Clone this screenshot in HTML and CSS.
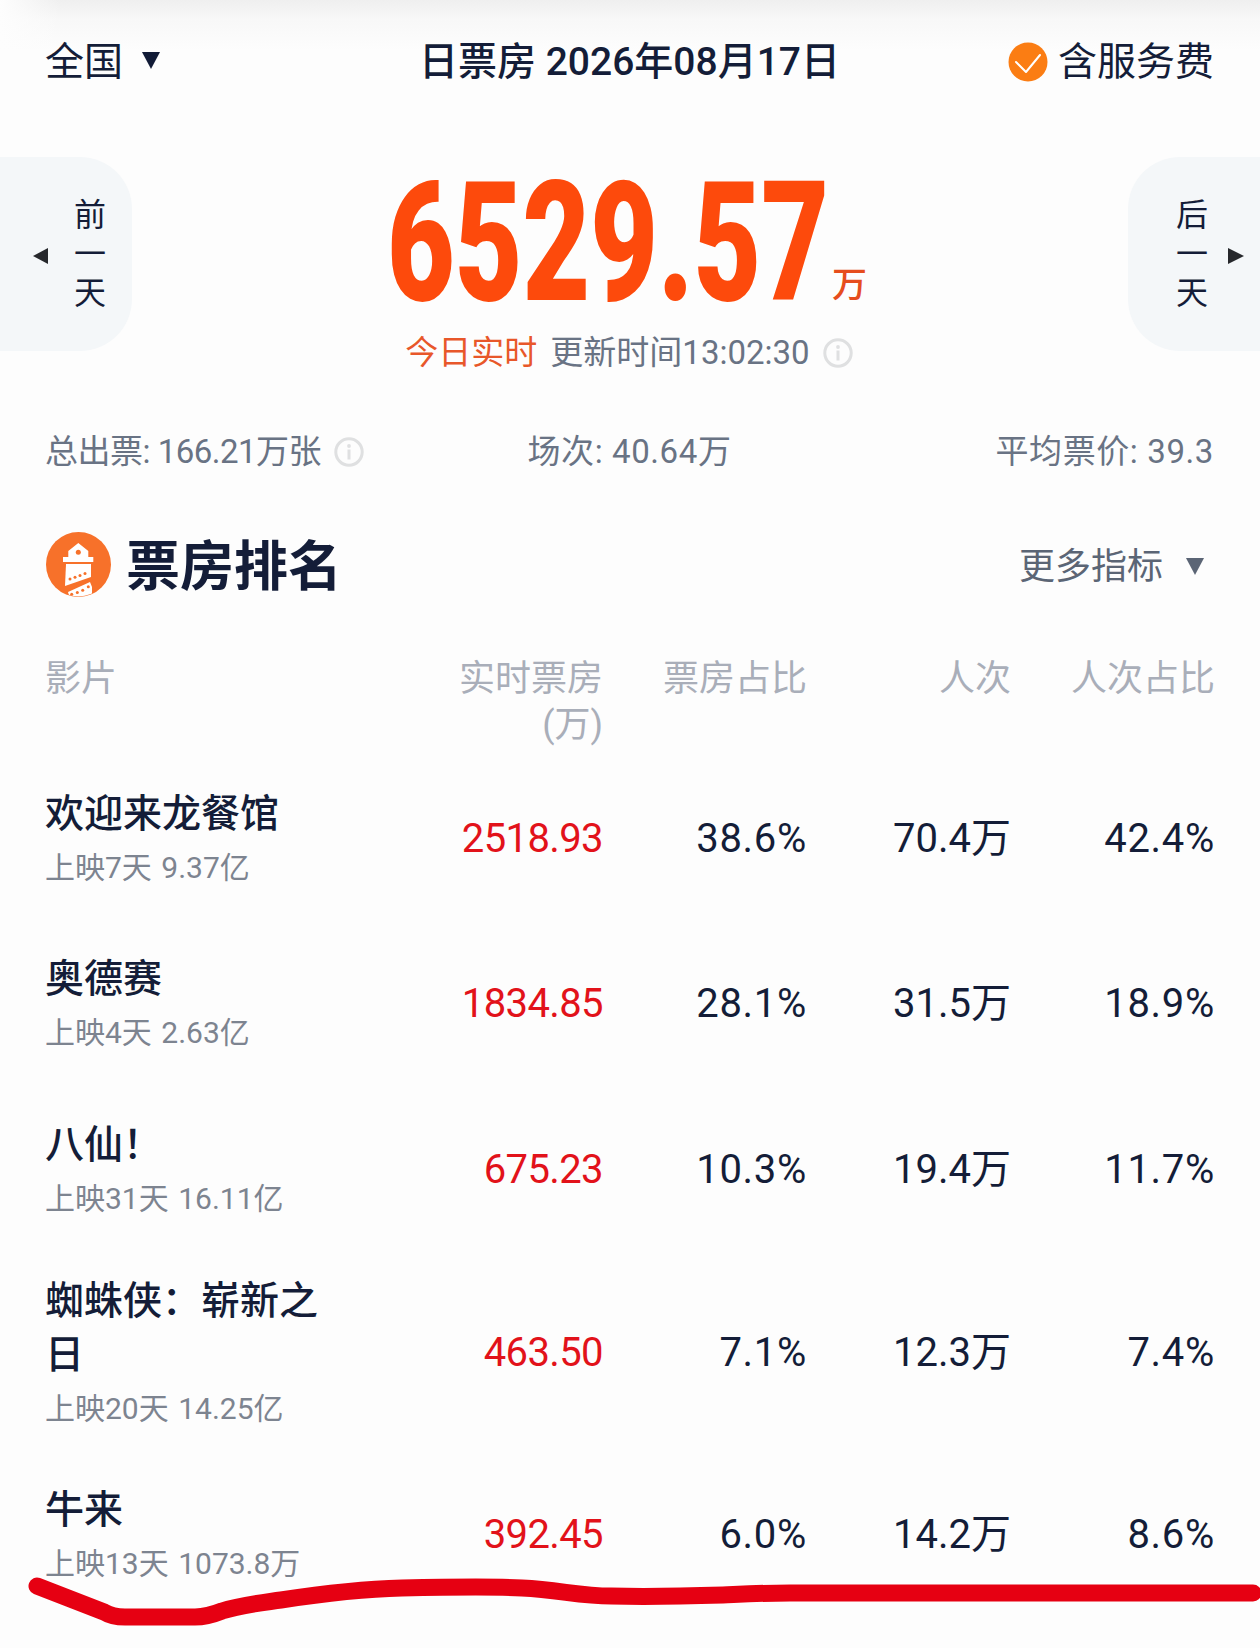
FILE: index.html
```html
<!DOCTYPE html>
<html lang="zh-CN">
<head>
<meta charset="utf-8">
<title>日票房</title>
<link rel="stylesheet" href="styles.css">
</head>
<body>
<div class="page">
  <header class="top">
    <div class="region"><span>全国</span><i class="tri tri-down tri-region"></i></div>
    <div class="date">日票房 2026年08月17日</div>
    <div class="fee">
      <svg class="check" viewBox="0 0 40 40"><circle cx="20" cy="20" r="19.5" fill="#fb7d13"/><path d="M8 20l10 10L32 13" fill="none" stroke="#fff" stroke-width="2" stroke-linecap="round" stroke-linejoin="round"/></svg>
      <span>含服务费</span>
    </div>
  </header>

  <section class="hero">
    <div class="day day-prev">
      <i class="arrow arrow-left"></i>
      <div class="day-text"><span>前</span><span>一</span><span>天</span></div>
    </div>
    <div class="hero-main">
      <div class="total"><span class="total-box"><span class="total-num">6529.57</span></span><span class="total-unit">万</span></div>
      <div class="updated">
        <span class="live">今日实时</span><span class="time">更新时间13:02:30</span>
        <svg class="info" viewBox="0 0 30 30"><use href="#info-glyph"/></svg>
      </div>
    </div>
    <div class="day day-next">
      <div class="day-text"><span>后</span><span>一</span><span>天</span></div>
      <i class="arrow arrow-right"></i>
    </div>
  </section>

  <section class="stats">
    <div class="stat stat-left"><span>总出票: 166.21万张</span>
      <svg class="info" viewBox="0 0 30 30"><use href="#info-glyph"/></svg></div>
    <div class="stat stat-mid">场次: 40.64万</div>
    <div class="stat stat-right">平均票价: 39.3</div>
  </section>

  <section class="rank-head">
    <svg class="logo" viewBox="0 0 65 65">
      <defs><clipPath id="logo-clip"><circle cx="32.5" cy="32.5" r="32"/></clipPath></defs>
      <circle cx="32.5" cy="32.5" r="32.5" fill="#f7712a"/>
      <path d="M32.3 11l10 8v6h5v5H17v-5h5.3v-6z" fill="#fff"/>
      <circle cx="32.3" cy="20.3" r="2.5" fill="#f7712a"/>
      <path d="M20 32h25v13l-26 9z" fill="#fff"/>
      <path d="M22 60l22-10 2 5v12H24z" fill="#fff" clip-path="url(#logo-clip)"/>
      <g fill="#f7712a"><circle cx="24" cy="47" r="1.5"/><circle cx="29" cy="45.2" r="1.5"/><circle cx="34" cy="43.4" r="1.5"/><circle cx="39" cy="41.6" r="1.5"/>
      <circle cx="25.7" cy="62.3" r="1.5"/><circle cx="31.3" cy="60.5" r="1.5"/><circle cx="36.7" cy="58.3" r="1.5"/><circle cx="42.3" cy="54.8" r="1.5"/></g>
    </svg>
    <h2 class="rank-title">票房排名</h2>
    <div class="more"><span>更多指标</span><i class="tri tri-down tri-grey"></i></div>
  </section>

  <section class="table">
    <div class="row row-head">
      <div class="film-h">影片</div>
      <div class="num">实时票房<br>(万)</div>
      <div class="num">票房占比</div>
      <div class="num">人次</div>
      <div class="num">人次占比</div>
    </div>
    <div class="row">
      <div class="film"><div class="film-name">欢迎来龙餐馆</div><div class="film-sub">上映7天 9.37亿</div></div>
      <div class="num red">2518.93</div><div class="num pct">38.6%</div><div class="num">70.4万</div><div class="num pct">42.4%</div>
    </div>
    <div class="row">
      <div class="film"><div class="film-name">奥德赛</div><div class="film-sub">上映4天 2.63亿</div></div>
      <div class="num red">1834.85</div><div class="num pct">28.1%</div><div class="num">31.5万</div><div class="num pct">18.9%</div>
    </div>
    <div class="row">
      <div class="film"><div class="film-name">八仙！</div><div class="film-sub">上映31天 16.11亿</div></div>
      <div class="num red">675.23</div><div class="num pct">10.3%</div><div class="num">19.4万</div><div class="num pct">11.7%</div>
    </div>
    <div class="row">
      <div class="film"><div class="film-name">蜘蛛侠：崭新之日</div><div class="film-sub">上映20天 14.25亿</div></div>
      <div class="num red">463.50</div><div class="num pct">7.1%</div><div class="num">12.3万</div><div class="num pct">7.4%</div>
    </div>
    <div class="row">
      <div class="film"><div class="film-name">牛来</div><div class="film-sub">上映13天 1073.8万</div></div>
      <div class="num red">392.45</div><div class="num pct">6.0%</div><div class="num">14.2万</div><div class="num pct">8.6%</div>
    </div>
  </section>

  <svg class="scribble" viewBox="0 0 1260 1648" aria-hidden="true">
    <path d="M37 1586L104 1612Q112 1617 125 1617L195 1617Q207 1617 222 1611C240 1605 260 1603 281 1600C320 1594 360 1589 402 1588C445 1587 490 1586 522 1588C560 1590 580 1596 611 1596C650 1597 690 1596 723 1595C745 1594 760 1593 790 1593L1253 1593" fill="none" stroke="#e60012" stroke-width="17" stroke-linecap="round" stroke-linejoin="round"/>
  </svg>

  <svg class="defs" width="0" height="0">
    <defs>
      <g id="info-glyph">
        <circle cx="15" cy="15" r="13.2" fill="none" stroke="#dfe0e1" stroke-width="3"/>
        <circle cx="15" cy="9" r="1.9" fill="#dfe0e1"/>
        <rect x="13.5" y="12.5" width="3" height="10" fill="#dfe0e1"/>
      </g>
    </defs>
  </svg>
</div>
</body>
</html>
```
FILE: styles.css
```css
* { box-sizing: border-box; }
html, body { margin: 0; padding: 0; }
body {
  width: 1260px;
  height: 1648px;
  overflow: hidden;
  font-family: "Roboto", "Noto Sans CJK SC", sans-serif;
  color: #141d38;
  background:
    linear-gradient(90deg, #fdfdfd, rgba(253,253,253,0) 60px),
    linear-gradient(#efefef, #f8f8f8 20px, #fdfdfd 50px);
}
.page { position: relative; width: 1260px; height: 1648px; }

.top {
  display: grid;
  grid-template-columns: 1fr auto 1fr;
  align-items: center;
  height: 115px;
  padding: 0 46px 0 45px;
  font-size: 39px;
}
.region { display: flex; align-items: center; gap: 19px; }
.date { font-size: 39px; font-weight: 500; }
.fee { display: flex; align-items: center; justify-content: flex-end; gap: 10px; }
.check { width: 40px; height: 40px; display: block; margin-top: 8px; }

.tri { display: block; width: 0; height: 0; margin-top: 6px; }
.tri-region { margin-top: 6px; }
.tri-down { border-left: 9px solid transparent; border-right: 9px solid transparent; border-top: 17px solid #111b36; }
.tri-grey { border-top-color: #5b6575; }

.hero {
  display: grid;
  grid-template-columns: 132px 1fr 132px;
  margin-top: 42px;
  height: 220px;
}
.day {
  height: 194px;
  background: #f4f7f9;
  display: flex;
  align-items: center;
  font-size: 32px;
}
.day-prev { border-radius: 0 52px 52px 0; padding-left: 33px; gap: 26px; }
.day-next { border-radius: 52px 0 0 52px; padding-left: 48px; gap: 20px; }
.day-text { display: flex; flex-direction: column; line-height: 39px; }
.arrow { display: block; width: 0; height: 0; margin-top: 4px; border-top: 8.5px solid transparent; border-bottom: 8.5px solid transparent; }
.arrow-left { border-right: 15px solid #26282c; }
.arrow-right { border-left: 16px solid #26282c; }

.hero-main { display: flex; flex-direction: column; align-items: center; }
.total { display: flex; align-items: flex-end; height: 158px; margin: 7px 0 0 -6px; }
.total-box { display: block; width: 436px; height: 158px; }
.total-num {
  display: inline-block;
  font-size: 167px;
  line-height: 158px;
  font-weight: 900;
  color: #fd4a0c;
  white-space: nowrap;
  transform: scaleX(.70);
  transform-origin: 0 50%;
}
.total-unit { font-size: 35px; line-height: 44px; color: #e64d1d; font-weight: 500; margin: 0 0 14px 9px; }
.updated { display: flex; align-items: center; font-size: 33px; line-height: 44px; margin: 9px 0 0 -2px; color: #697384; }
.live { color: #e8572a; margin-right: 13px; }
.info { display: block; width: 30px; height: 30px; flex: none; }
.updated .info { margin-left: 13px; }

.stats {
  display: grid;
  grid-template-columns: repeat(3, 1fr);
  margin-top: 53px;
  padding: 0 46px 0 45px;
  font-size: 33px;
  line-height: 44px;
  color: #697384;
}
.stat-left { display: flex; align-items: center; gap: 13px; letter-spacing: -.5px; }
.stat-mid { text-align: center; letter-spacing: .6px; }
.stat-right { text-align: right; letter-spacing: .6px; }

.rank-head {
  display: flex;
  align-items: center;
  margin-top: 55px;
  padding: 0 46px;
  height: 70px;
}
.logo { width: 65px; height: 65px; display: block; }
.rank-title { margin: 0 0 0 15px; padding-top: 8px; font-size: 54px; font-weight: 700; line-height: 70px; height: 78px; }
.more { margin-left: auto; display: flex; align-items: center; gap: 23px; font-size: 36px; color: #5b6575; padding: 0 10px 2px 0; }

.table { padding: 0 46px 0 45px; margin-top: 57px; }
.row {
  display: grid;
  grid-template-columns: 354px repeat(4, 204px);
  align-items: center;
  min-height: 165.5px;
  padding: 19px 0;
}
.num { text-align: right; font-size: 40px; line-height: 48px; }
.row:not(.row-head) .num { padding-bottom: 4px; }
.num.pct { letter-spacing: .7px; }
.num.red { color: #e2121a; letter-spacing: -.6px; }
.row-head {
  align-items: start;
  min-height: 0;
  padding: 0 0 10px;
  font-size: 36px;
  line-height: 46px;
  color: #a9aeb9;
}
.row-head .num { font-size: 36px; line-height: 46px; }
.film-name { font-size: 39px; line-height: 54px; font-weight: 500; max-width: 295px; }
.film-sub { font-size: 30px; line-height: 54px; color: #7d8490; white-space: nowrap; word-spacing: 2px; }

.scribble { position: absolute; left: 0; top: 0; width: 1260px; height: 1648px; pointer-events: none; }
.defs { position: absolute; }
```
